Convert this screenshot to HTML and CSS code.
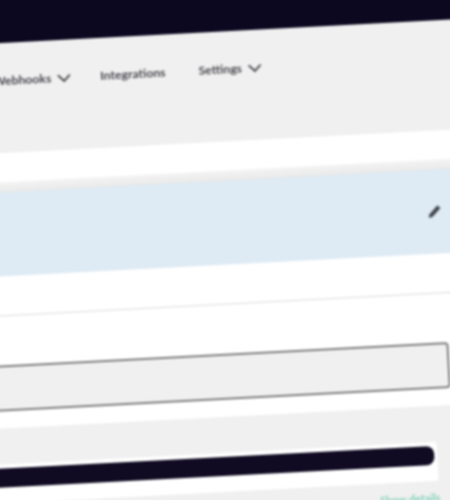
FILE: index.html
```html
<!DOCTYPE html>
<html lang="en">
<head>
<meta charset="utf-8">
<title>Webhooks settings</title>
<link rel="stylesheet" href="styles.css">
</head>
<body>
<div class="page">
  <header class="topbar"></header>
  <nav class="nav">
    <span class="nav-item">Webhooks
      <svg class="chevron" viewBox="0 0 14 9" aria-hidden="true"><path d="M1 1.2 7 7.2l6-6"/></svg>
    </span>
    <span class="nav-item">Integrations</span>
    <span class="nav-item nav-item-last">Settings
      <svg class="chevron" viewBox="0 0 14 9" aria-hidden="true"><path d="M1 1.2 7 7.2l6-6"/></svg>
    </span>
  </nav>
  <div class="strip"></div>
  <div class="shade"></div>
  <section class="banner">
    <svg class="pencil" viewBox="0 0 14 14" aria-hidden="true"><path d="M1 13l.8-3.6L9.6 1.6a1 1 0 0 1 1.4 0l1.4 1.4a1 1 0 0 1 0 1.4L4.600 12.200z"/></svg>
  </section>
  <div class="row-rule"></div>
  <div class="field"></div>
  <section class="panel">
    <div class="card"><div class="bar"></div></div>
    <a class="details">Show details</a>
  </section>
</div>
</body>
</html>
```
FILE: styles.css
```css
html, body {
  margin: 0;
  height: 500px;
  overflow: hidden;
  background: #fff;
}
.page {
  width: 520px;
  height: 600px;
  background: #fff;
  transform-origin: 0 0;
  transform: translate(-30px, -15.4px) rotate(-3deg);
  filter: blur(1px);
  font-family: "Lato", "Liberation Sans", sans-serif;
}
.topbar {
  height: 60px;
  background: #0c0820;
}
.nav {
  height: 110px;
  box-sizing: border-box;
  padding: 30px 0 0 18px;
  display: flex;
  align-items: flex-start;
  gap: 29px;
  background: #f0f0f0;
}
.nav-item {
  display: flex;
  align-items: center;
  gap: 6px;
  font-size: 12.2px;
  line-height: 16px;
  font-weight: 700;
  color: #47474e;
}
.nav-item-last {
  margin-left: 4px;
}
.chevron {
  width: 14px;
  height: 9px;
  fill: none;
  stroke: #47474e;
  stroke-width: 1.8;
}
.strip {
  height: 29px;
  background: #fff;
}
.shade {
  height: 10px;
  background: linear-gradient(#f4f4f4, #e9e9e9);
}
.banner {
  height: 84px;
  box-sizing: border-box;
  padding: 35px 0 0 445px;
  background: #deeaf4;
}
.pencil {
  display: block;
  width: 14px;
  height: 14px;
  fill: #3f4247;
}
.row-rule {
  height: 39px;
  background: #fff;
  border-bottom: 1px solid #dcdcdc;
}
.field {
  height: 46px;
  box-sizing: border-box;
  margin: 49px 61px 0 -10px;
  background: #f0f0f0;
  border: 2px solid #7f7f7f;
  border-radius: 4px;
}
.panel {
  margin-top: 17px;
  padding: 36px 78px 0 0;
  height: 200px;
  box-sizing: border-box;
  background: #f0f0f0;
}
.card {
  height: 39px;
  box-sizing: border-box;
  padding: 4px 3px 0 0;
  background: #fff;
  border-radius: 0 3px 3px 0;
}
.bar {
  height: 19px;
  background: #100b22;
  border-radius: 0 8px 8px 0;
}
.details {
  display: block;
  margin: 10px -1px 0 0;
  text-align: right;
  font-size: 10.8px;
  line-height: 13px;
  font-weight: 700;
  color: #86d1bc;
}
```
